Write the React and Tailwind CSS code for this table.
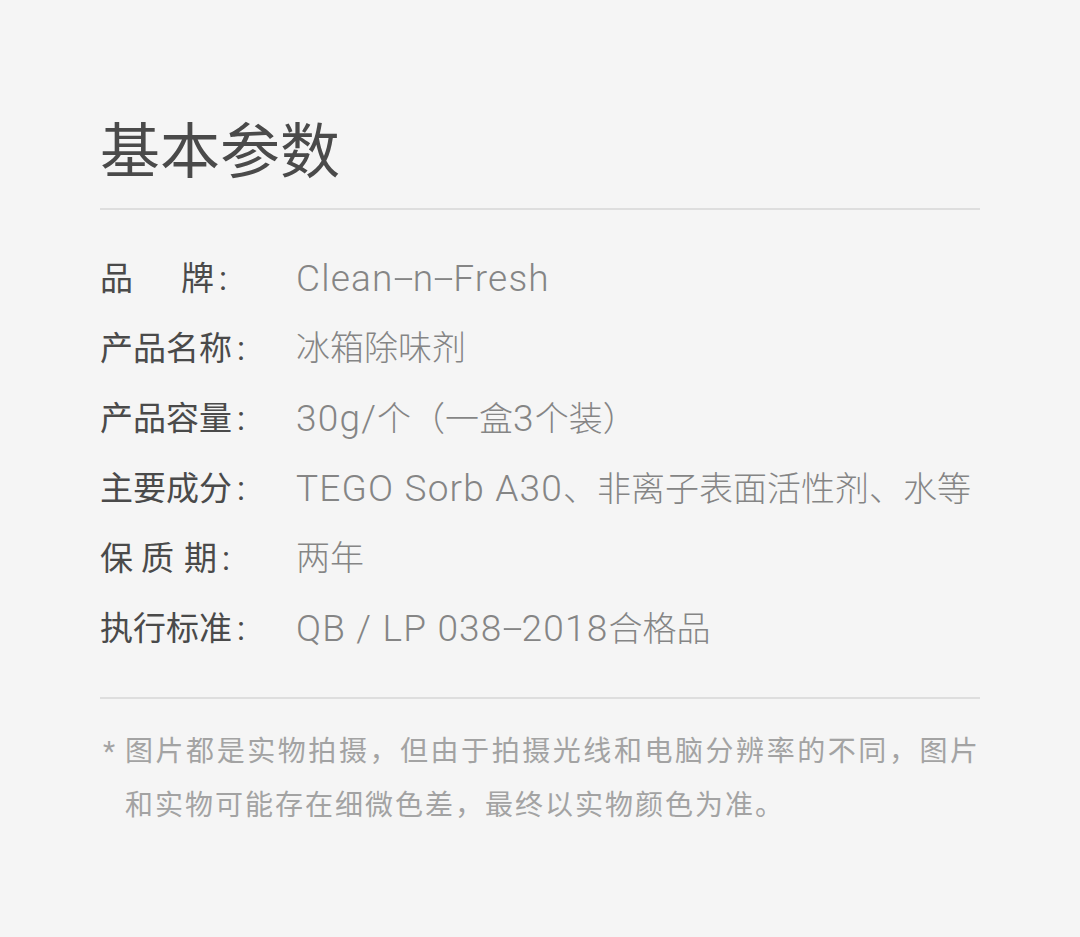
import React from 'react';

const FONT = { fontFamily: 'Roboto, "Noto Sans CJK SC", sans-serif' };

const rows = [
  { label: ['品', '牌'], gaps: ['ml-[48px]'], value: 'Clean-n-Fresh' },
  { label: ['产品名称'], value: '冰箱除味剂' },
  { label: ['产品容量'], value: '30g/个（一盒3个装）' },
  { label: ['主要成分'], value: 'TEGO Sorb A30、非离子表面活性剂、水等' },
  { label: ['保', '质', '期'], gaps: ['ml-[8px]', 'ml-[10px]'], value: '两年' },
  { label: ['执行标准'], value: 'QB / LP 038-2018合格品' },
];

// latin runs are set larger/wider than the CJK text, hyphens drawn long
const Latin = ({ text }) => {
  const parts = text.split('-');
  return (
    <span className="text-[37px] tracking-[1.2px]">
      {parts.map((p, i) => (
        <React.Fragment key={i}>
          {i > 0 && (
            <span className="inline-block w-[19px] text-center scale-x-[2] tracking-normal">-</span>
          )}
          {p}
        </React.Fragment>
      ))}
    </span>
  );
};

const Value = ({ value }) => {
  const pieces = value.split(/([A-Za-z0-9 /-]+)/).filter(Boolean);
  return (
    <div className="text-[34px] text-[#858585] font-light whitespace-nowrap">
      {pieces.map((p, i) =>
        /^[A-Za-z0-9 /-]+$/.test(p) ? <Latin key={i} text={p} /> : <span key={i}>{p}</span>
      )}
    </div>
  );
};

const Row = ({ label, gaps = [], value }) => (
  <div className="flex items-center h-[70px] text-[33px] leading-none">
    <div className="w-[196px] flex items-center text-[#4a4a4a] shrink-0">
      {label.map((part, i) => (
        <span key={i} className={i > 0 ? gaps[i - 1] : ''}>
          {part}
        </span>
      ))}
      <span className="ml-[5px]">:</span>
    </div>
    <Value value={value} />
  </div>
);

const App = () => {
  return (
    <div className="min-h-[937px] bg-[#f5f5f5] px-[100px] pt-[118px]" style={FONT}>
      <h1 className="text-[60px] leading-[70px] text-[#4a4a4a] font-normal">基本参数</h1>
      <div className="mt-[20px] h-[2px] bg-[#dedede]" />

      <div className="mt-[33px]">
        {rows.map((r, i) => (
          <Row key={i} {...r} />
        ))}
      </div>

      <div className="mt-[34px] h-[2px] bg-[#dedede]" />

      <div className="mt-[26px] flex text-[28px] leading-[54px] text-[#a3a3a3]">
        <span className="w-[25px] shrink-0 pl-[3px]">*</span>
        <p className="text-justify tracking-[2px]">
          图片都是实物拍摄，但由于拍摄光线和电脑分辨率的不同，图片和实物可能存在细微色差，最终以实物颜色为准。
        </p>
      </div>
    </div>
  );
};

export default App;
